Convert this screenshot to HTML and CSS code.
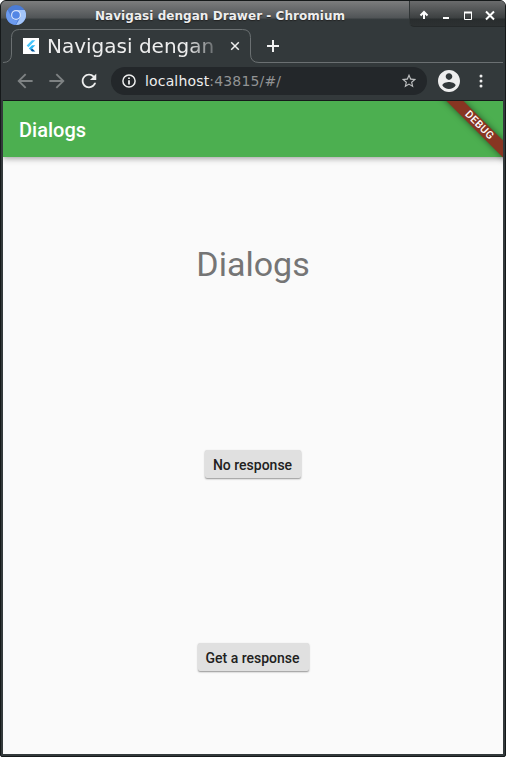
FILE: index.html
```html
<!DOCTYPE html>
<html lang="id">
<head>
<meta charset="utf-8">
<title>Navigasi dengan Drawer</title>
<link rel="stylesheet" href="styles.css">
</head>
<body>
<div class="window">
  <header class="titlebar">
    <svg class="app-icon" width="20" height="20" viewBox="0 0 20 20">
      <circle cx="10" cy="10" r="10" fill="#4b7cd6"/>
      <path d="M10 5H18.7A10 10 0 0 1 10 20L14.3 12.5Z" fill="#a3c5fa"/>
      <path d="M1.5 4.8 5.7 12.5A5 5 0 0 0 12 14.6L9.500 20A10 10 0 0 1 1.500 4.800Z" fill="#6c9bef"/>
      <circle cx="10" cy="10" r="5" fill="#d5e3fc"/>
      <circle cx="10" cy="10" r="3.8" fill="#5286e5"/>
    </svg>
    <div class="window-title">Navigasi dengan Drawer - Chromium</div>
    <div class="window-controls">
      <svg width="94" height="26" viewBox="0 0 94 26" fill="none" stroke="#fff" stroke-width="2">
        <path d="M14 18V11M10.500 14.500 14 11 17.500 14.500"/>
        <path d="M33 17H39"/>
        <path d="M54 11.500H62M54.500 11V18.500H61.500V11" stroke-width="1"/>
        <path d="M54 11.500H62" stroke-width="2"/>
        <path d="M76 10.500 84 18.500M84 10.500 76 18.500"/>
      </svg>
    </div>
  </header>
  <div class="tabstrip">
    <svg class="tab-outline" width="500" height="36" viewBox="0 0 500 36" fill="none" stroke="#6b7072">
      <path d="M0 35.500Q8.500 35.500 8.500 27V10.500Q8.500 2.500 16.500 2.500H239.500Q247.500 2.500 247.500 10.500V27Q247.500 35.500 256 35.500H500"/>
    </svg>
    <svg class="favicon" width="16" height="16" viewBox="0 0 16 16">
      <path d="M0 0H16V16H0Z" fill="#fff"/>
      <path d="M9 2.200H12.300L5.400 9.200 3.700 7.500Z" fill="#47c5fb"/>
      <path d="M9 7.300H12.300L9.200 10.400 7.500 12.100 5.800 10.400Z" fill="#29b6f6"/>
      <path d="M7.500 12.100 9.200 10.400 12.300 13.600H9Z" fill="#01579b"/>
    </svg>
    <div class="tab-title">Navigasi dengan</div>
    <svg class="tab-close" width="10" height="10" viewBox="0 0 10 10" stroke="#eee" stroke-width="1.500"><path d="M1.200 1.200 8.800 8.800M8.800 1.200 1.200 8.800"/></svg>
    <svg class="tab-new" width="12" height="12" viewBox="0 0 12 12" stroke="#f2f2f2" stroke-width="2"><path d="M0 6H12M6 0V12"/></svg>
  </div>
  <div class="toolbar">
    <svg class="nav" width="20" height="20" viewBox="1.500 1.500 21 21" fill="#7e8283"><path d="M20 11H7.830l5.590-5.590L12 4l-8 8 8 8 1.410-1.410L7.830 13H20v-2z"/></svg>
    <svg class="nav" width="20" height="20" viewBox="1.500 1.500 21 21" fill="#7e8283"><path d="M12 4l-1.410 1.410L16.170 11H4v2h12.170l-5.580 5.590L12 20l8-8z"/></svg>
    <svg class="nav" width="20" height="20" viewBox="1 1 22 22" fill="#eee"><path d="M17.650 6.350C16.200 4.900 14.210 4 12 4c-4.420 0-7.990 3.580-7.990 8s3.570 8 7.990 8c3.730 0 6.840-2.550 7.730-6h-2.080c-.820 2.330-3.040 4-5.650 4-3.310 0-6-2.690-6-6s2.690-6 6-6c1.660 0 3.140.690 4.220 1.780L13 11h7V4l-2.350 2.350z"/></svg>
    <div class="address">
      <svg width="14" height="14" viewBox="0 0 14 14" fill="none" stroke="#eee" stroke-width="1.500"><circle cx="7" cy="7" r="6.100"/><path d="M7 6.200V10.500M7 3.500V5" stroke-width="1.800"/></svg>
      <div class="url">localhost<span>:43815/#/</span></div>
      <svg width="16" height="16" viewBox="1 1 22 22" fill="#bcbebf"><path d="M22 9.240l-7.190-.620L12 2 9.190 8.630 2 9.240l5.460 4.730L5.820 21 12 17.270 18.180 21l-1.630-7.030L22 9.240zM12 15.400l-3.760 2.270 1-4.280-3.320-2.880 4.380-.380L12 6.100l1.710 4.040 4.380.380-3.320 2.880 1 4.280L12 15.400z"/></svg>
    </div>
    <svg class="profile" width="22" height="22" viewBox="2 2 20 20" fill="#eee"><path d="M12 2C6.480 2 2 6.480 2 12s4.480 10 10 10 10-4.480 10-10S17.520 2 12 2zm0 3c1.660 0 3 1.340 3 3s-1.340 3-3 3-3-1.340-3-3 1.340-3 3-3zm0 14.200c-2.500 0-4.710-1.280-6-3.220.030-1.990 4-3.080 6-3.080 1.990 0 5.970 1.090 6 3.080-1.290 1.940-3.500 3.220-6 3.220z"/></svg>
    <svg class="more" width="4" height="14" viewBox="0 0 4 14" fill="#eee"><circle cx="2" cy="2" r="1.500"/><circle cx="2" cy="7" r="1.500"/><circle cx="2" cy="12" r="1.500"/></svg>
  </div>
  <main class="page">
    <div class="appbar">Dialogs</div>
    <div class="debug">DEBUG</div>
    <div class="content">
      <h1>Dialogs</h1>
      <button>No response</button>
      <button class="wide">Get a response</button>
    </div>
  </main>
</div>
</body>
</html>
```

FILE: styles.css
```css
* { box-sizing: border-box; }
body { margin: 0; background: #fff; }
svg { display: block; flex: none; }
.window {
  width: 506px; height: 757px;
  display: flex; flex-direction: column;
  background: #33393b;
  border: 1px solid #15191a;
  border-radius: 6px 6px 2px 2px;
  padding: 0 2px 2px;
  overflow: hidden;
  font-family: "DejaVu Sans", sans-serif;
}
.titlebar {
  height: 26px; flex: none;
  display: flex;
  margin: 0 -2px; padding-left: 5px;
  background: linear-gradient(#7c7d7e, #505456 17px, #363c3e 18px, #33393b 19px);
}
.app-icon { margin-top: 4px; }
.window-title {
  flex: 1; padding-left: 69px;
  font-size: 12px; line-height: 30px; font-weight: bold; letter-spacing: .05px;
  color: #eee; white-space: nowrap;
  text-shadow: 0 1px 1px #222;
}
.window-controls {
  width: 96px; height: 26px;
  border-left: 1px solid #303536; border-bottom: 1px solid #25292a;
  border-bottom-left-radius: 5px;
  background: linear-gradient(#6a6b6c, #3c4041 17px, #292d2e 18px, #2c3031);
}
.tabstrip { position: relative; height: 36px; flex: none; display: flex; align-items: center; padding-left: 20px; }
.tab-outline { position: absolute; left: 0; top: 0; }
.favicon { margin-top: 2px; }
.tab-title {
  margin: 1px 0 0 8px; width: 180px;
  font-size: 20px; line-height: 28px; white-space: nowrap; color: #eee;
  -webkit-mask-image: linear-gradient(90deg, #000 140px, transparent 178px);
  mask-image: linear-gradient(90deg, #000 140px, transparent 178px);
}
.tab-close { margin: 2px 0 0 3px; }
.tab-new { margin: 2px 0 0 27px; }
.toolbar {
  height: 38px; flex: none; display: flex; align-items: center;
  padding: 1px 0 2px 12px; border-bottom: 1px solid #15191a;
}
.nav { margin-right: 12px; }
.address {
  width: 316px; height: 28px; border-radius: 14px;
  display: flex; align-items: center; padding: 0 10px 0 11px;
  background: #23272a;
}
.url { flex: 1; padding-left: 9px; font-size: 14px; letter-spacing: .16px; color: #eee; }
.url span { color: #919394; }
.profile { margin-left: 11px; }
.more { margin-left: 19.400px; }
.page {
  position: relative; flex: 1; min-height: 0;
  display: flex; flex-direction: column; overflow: hidden;
  background: #fafafa; font-family: Roboto, sans-serif;
}
.appbar {
  position: relative;
  height: 56px; flex: none; padding-left: 16px;
  background: #4caf50; color: #fff;
  font-size: 20px; line-height: 58px; font-weight: 500;
  box-shadow: 0 2px 4px -1px rgba(0,0,0,.2), 0 4px 5px rgba(0,0,0,.1), 0 1px 8px rgba(0,0,0,.08);
}
.debug {
  position: absolute; right: -33px; top: 18px;
  width: 114px; height: 12px; padding-left: 1px;
  transform: rotate(45deg);
  background: #883522; color: #fff;
  text-align: center; font-size: 10.500px; line-height: 12px; font-weight: 500; letter-spacing: .5px;
  box-shadow: 0 0 6px rgba(0,0,0,.5);
}
.content {
  flex: 1; display: flex; flex-direction: column; align-items: center; justify-content: space-around;
  padding-bottom: 1px;
}
h1 { margin: 0; height: 66px; font-size: 34px; line-height: 70px; font-weight: 400; color: #757575; }
button {
  width: 96px; height: 28px; margin: 10px 0; padding: 0 1px 0 0;
  border: 0; border-radius: 2px; background: #e0e0e0; color: #212121;
  font: 500 14px/30px Roboto, sans-serif;
  box-shadow: 0 1px 2px rgba(0,0,0,.34), 0 1px 1px rgba(0,0,0,.1);
}
.wide { width: 111px; margin-left: 1px; padding-right: 2px; }
```
